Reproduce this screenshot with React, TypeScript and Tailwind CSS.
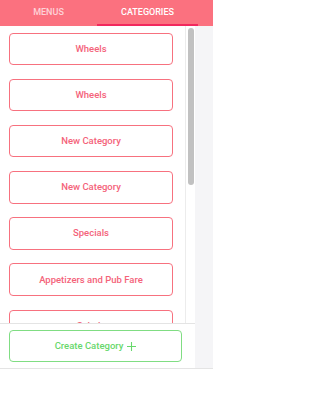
const categories = [
  'Wheels',
  'Wheels',
  'New Category',
  'New Category',
  'Specials',
  'Appetizers and Pub Fare',
  'Salads',
]

const App = () => {
  return (
    <div className="w-[213px] h-[400px] bg-white font-['Roboto',sans-serif] overflow-hidden">
      {/* Tabs */}
      <div className="flex h-[26px] bg-[#fb717f]">
        <div className="w-[97px] flex items-center justify-center text-[9px] font-medium uppercase text-white/70">
          Menus
        </div>
        <div className="relative w-[101px] flex items-center justify-center text-[9px] font-medium uppercase text-white">
          Categories
          <span className="absolute left-0 right-0 bottom-0 h-[2px] bg-[#f2285d]" />
        </div>
      </div>

      {/* Body */}
      <div className="flex h-[343px] border-b border-[#e4e4e4]">
        <div className="w-[195px] flex flex-col">
          <div className="flex flex-1 min-h-0">
            <div className="flex-1 overflow-hidden flex flex-col gap-[13.7px] pt-[6.5px] pl-[9px]">
              {categories.map((name, i) => (
                <button
                  key={i}
                  className="h-[32.5px] w-[164px] shrink-0 rounded-[4px] border-[1.5px] border-[#f7717f] bg-white text-[9.5px] font-medium text-[#f4637a]"
                >
                  {name}
                </button>
              ))}
            </div>
            {/* scrollbar */}
            <div className="w-[10px] border-l border-[#ececec] bg-white pt-[2px] pl-[1.5px]">
              <div className="w-[6px] h-[157px] rounded-full bg-[#c1c1c1]" />
            </div>
          </div>
          <div className="border-t border-[#e4e4e4] pt-[6px] pb-[6px] pl-[9px]">
            <button className="h-[32px] w-[173px] rounded-[4px] border-[1.5px] border-[#80dd83] flex items-center justify-center gap-[4px] text-[9.5px] font-medium text-[#68d86c]">
              Create Category
              <svg width="9" height="9" viewBox="0 0 10 10" fill="none" stroke="#68d86c" strokeWidth="1.2">
                <path d="M5 0v10M0 5h10" />
              </svg>
            </button>
          </div>
        </div>
        <div className="flex-1 bg-[#f5f5f7]" />
      </div>
    </div>
  )
}

export default App
